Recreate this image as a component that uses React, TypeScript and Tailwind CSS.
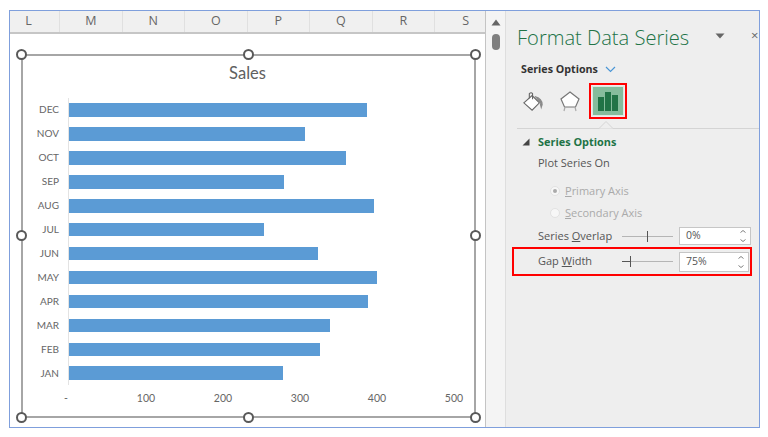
const months: [string, number][] = [
  ["DEC", 298], ["NOV", 236], ["OCT", 277], ["SEP", 215], ["AUG", 305], ["JUL", 195],
  ["JUN", 249], ["MAY", 308], ["APR", 299], ["MAR", 261], ["FEB", 251], ["JAN", 214],
];
const cols = ["L", "M", "N", "O", "P", "Q", "R", "S"];
const ticks = ["100", "200", "300", "400", "500"];

function Handle({ className }: { className: string }) {
  return <div className={`absolute w-[11px] h-[11px] rounded-full bg-white border-2 border-[#595959] ${className}`} />;
}

function Spin() {
  return (
    <svg width="8" height="14" viewBox="0 0 8 14" fill="none" stroke="#808080" strokeWidth="1">
      <path d="M1.5 3.5 L4 1.5 L6.5 3.5" />
      <path d="M1.5 10.5 L4 12.5 L6.5 10.5" />
    </svg>
  );
}

function SliderRow({ label, value, pos, boxed }: { label: React.ReactNode; value: string; pos: string; boxed?: boolean }) {
  return (
    <div className={`flex items-center ${boxed ? "h-[29px] border-2 border-[#ff0000] ml-[6px] w-[240px] pl-[24px]" : "h-[18px] ml-[32px] w-[214px]"}`}>
      <div className="w-[84px] shrink-0 text-[11px] text-[#555] whitespace-nowrap">{label}</div>
      <div className="relative w-[51px] shrink-0 h-[1px] bg-[#b5b5b5]">
        <div className={`absolute top-[-5px] w-[1px] h-[11px] bg-[#555] ${pos}`} />
        {boxed && <div className="absolute left-0 top-0 w-[8px] h-[1px] bg-[#555]" />}
      </div>
      <div className={`ml-[6px] shrink-0 bg-white border border-[#c6c6c6] flex items-center justify-between pl-[6px] pr-[3px] text-[10.5px] text-[#555] ${boxed ? "w-[70px] h-[20px]" : "w-[72px] h-[18px]"}`}>
        <span>{value}</span>
        <Spin />
      </div>
    </div>
  );
}

export default function App() {
  return (
    <div className="w-[768px] h-[437px] bg-white pt-[10px] pl-[9px] overflow-hidden font-['Open_Sans',sans-serif]">
      <div className="w-[751px] h-[418px] border border-[#7f9fdc] flex">
        <div className="w-[476px] h-full border-r border-[#c4c4c4] flex flex-col shrink-0">
          <div className="h-[23px] bg-[#f0f0f0] border-b-2 border-[#c6c6c6] flex overflow-hidden shrink-0">
            {cols.map((c, i) => (
              <div
                key={c}
                className={`h-full flex items-center justify-center text-[12.5px] text-[#666] border-r border-[#e0e0e0] shrink-0 ${i === 0 ? "w-[50px] pr-[12px]" : "w-[62.5px]"}`}
              >
                {c}
              </div>
            ))}
          </div>
          <div className="flex-1 bg-white pt-[20px] pl-[11px]">
            <div className="relative w-[455px] h-[364px] border-2 border-[#a6a6a6] bg-white">
              <Handle className="left-[-7px] top-[-7px]" />
              <Handle className="left-[220px] top-[-7px]" />
              <Handle className="right-[-7px] top-[-7px]" />
              <Handle className="left-[-7px] top-[174px]" />
              <Handle className="right-[-7px] top-[174px]" />
              <Handle className="left-[-7px] bottom-[-7px]" />
              <Handle className="left-[220px] bottom-[-7px]" />
              <Handle className="right-[-7px] bottom-[-7px]" />
              <div className="h-[42px] pt-[5px] pr-[2px] text-center text-[16.5px] leading-[24px] text-[#606060] font-['Lato',sans-serif]">Sales</div>
              <div className="flex flex-col">
                {months.map(([m, w]) => (
                  <div key={m} className="flex items-center h-[23.95px]">
                    <div className="w-[36px] text-right text-[10px] text-[#666] font-['Lato',sans-serif]">{m}</div>
                    <div className="ml-[9px] h-full border-l border-[#e3e3e3] flex items-center">
                      <div className="h-[13.6px] bg-[#5b9bd5]" style={{ width: w }} />
                    </div>
                  </div>
                ))}
              </div>
              <div className="flex mt-[5px] pl-[7.5px] text-[10.5px] leading-[16px] text-[#666] font-['Lato',sans-serif]">
                <div className="w-[77px] shrink-0 text-center pr-[6px]">-</div>
                {ticks.map((t) => (
                  <div key={t} className="w-[77px] shrink-0 text-center">{t}</div>
                ))}
              </div>
            </div>
          </div>
        </div>

        <div className="w-[20px] bg-[#f4f4f4] border-r border-[#dedede] flex flex-col items-center pt-[8px] shrink-0">
          <svg width="10" height="7" viewBox="0 0 10 7"><path d="M5 0.5 L9.5 6.5 L0.5 6.5 Z" fill="#666" /></svg>
          <div className="mt-[8px] w-[8px] h-[16px] rounded-full bg-[#7f7f7f]" />
        </div>

        <div className="flex-1 bg-[#eeeeee] overflow-hidden">
          <div className="flex items-center h-[28px] mt-[13px] pl-[11px] relative">
            <span className="text-[20.1px] leading-[28px] font-light text-[#217346] whitespace-nowrap">Format Data Series</span>
            <svg className="absolute left-[209px] top-[9px]" width="10" height="6" viewBox="0 0 10 6"><path d="M0.5 0.5 L9.5 0.5 L5 5.5 Z" fill="#666" /></svg>
            <span className="absolute left-[245px] top-[2px] text-[13px] text-[#666]">×</span>
          </div>
          <div className="flex items-center h-[16px] mt-[9px] pl-[15px] text-[10.7px] font-bold text-[#333]">
            Series Options
            <svg className="ml-[7px]" width="11" height="7" viewBox="0 0 11 7" fill="none" stroke="#4a96d6" strokeWidth="1.2"><path d="M1 1 L5.5 5.5 L10 1" /></svg>
          </div>
          <div className="flex items-center h-[36px] mt-[6px] pl-[16px]">
            <svg width="22" height="24" viewBox="0 0 24 24" fill="none" stroke="#666" strokeWidth="1.2">
              <path d="M2 14 L11 6 L19 14 L11 22 Z" fill="#fff" />
              <path d="M8 9 L8 4 Q10 2 11.5 4 L11.5 10" />
              <path d="M14 7 Q22 9 22 16 L21 19 L20 15" fill="#8a8a8a" stroke="#8a8a8a" />
            </svg>
            <svg className="ml-[15px]" width="22" height="22" viewBox="0 0 22 22" fill="none" stroke="#777" strokeWidth="1.2">
              <path d="M11 2 L20 9 L16.5 17 L5.5 17 L2 9 Z" fill="#fff" />
              <path d="M6 17 L5 21 M16 17 L17 21" stroke="#aaa" />
            </svg>
            <div className="ml-[8px] w-[38px] h-[36px] border-2 border-[#ff0000] p-[1px] shrink-0">
              <div className="w-full h-full bg-[#86bc9c] border border-[#dbe9e0] flex items-end justify-center gap-[1px] pb-[4px]">
                <div className="w-[6px] h-[14px] bg-[#217346]" />
                <div className="w-[6px] h-[19px] bg-[#217346]" />
                <div className="w-[6px] h-[16px] bg-[#217346]" />
              </div>
            </div>
          </div>
          <div className="relative h-[1px] mt-[9px] ml-[11px] bg-[#d4d4d4]">
            <svg className="absolute left-[82px] top-[-7px]" width="14" height="8" viewBox="0 0 14 8" fill="#eeeeee" stroke="#d4d4d4"><path d="M0 7.5 L7 0.5 L14 7.5" /></svg>
          </div>
          <div className="flex items-center h-[16px] mt-[5px] pl-[16px] text-[10.9px] font-bold text-[#217346]">
            <svg width="8" height="8" viewBox="0 0 8 8"><path d="M7.5 0.5 L7.5 7.5 L0.5 7.5 Z" fill="#444" /></svg>
            <span className="ml-[8px]">Series Options</span>
          </div>
          <div className="h-[16px] mt-[5px] pl-[32px] text-[11px] leading-[16px] text-[#555]">Plot Series On</div>
          <div className="flex items-center h-[16px] mt-[12px] pl-[44px] text-[11px] text-[#aaa]">
            <div className="w-[10px] h-[10px] rounded-full bg-[#f7f7f7] border border-[#e2e2e2] flex items-center justify-center">
              <div className="w-[4px] h-[4px] rounded-full bg-[#aaa]" />
            </div>
            <span className="ml-[5px]"><span className="underline">P</span>rimary Axis</span>
          </div>
          <div className="flex items-center h-[16px] mt-[6px] pl-[44px] text-[11px] text-[#aaa]">
            <div className="w-[10px] h-[10px] rounded-full bg-[#f7f7f7] border border-[#e2e2e2]" />
            <span className="ml-[5px]"><span className="underline">S</span>econdary Axis</span>
          </div>
          <div className="mt-[6px]">
            <SliderRow label={<>Series <span className="underline">O</span>verlap</>} value="0%" pos="left-[25px]" />
          </div>
          <div className="mt-[2px]">
            <SliderRow boxed label={<>Gap <span className="underline">W</span>idth</>} value="75%" pos="left-[8px]" />
          </div>
        </div>
      </div>
    </div>
  );
}
